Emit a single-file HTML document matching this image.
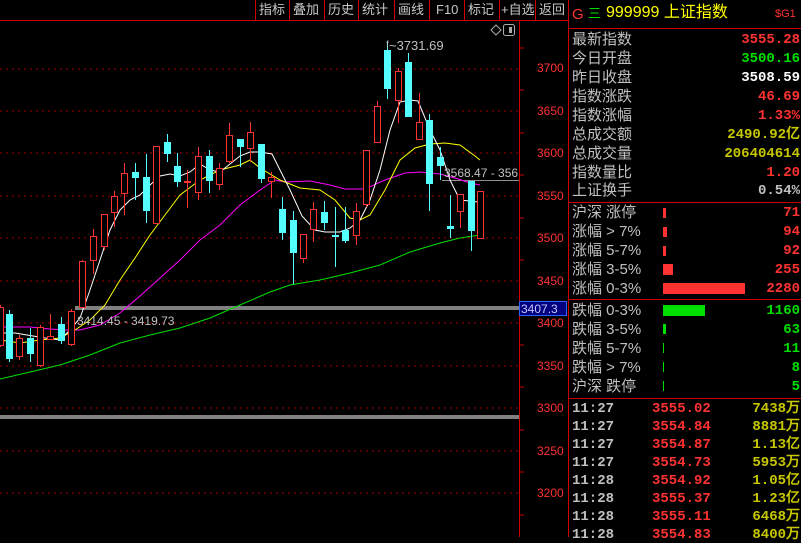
<!DOCTYPE html>
<html><head><meta charset="utf-8"><style>
*{margin:0;padding:0}
body{width:801px;height:537px;background:#000;overflow:hidden;position:relative;font-family:"Liberation Sans","Noto Sans CJK SC",sans-serif;}
.a{position:absolute;white-space:nowrap;line-height:1}
.m{font-size:13px;color:#c8c8c8;top:3px}
.p{font-size:15px;color:#c0c0c0;left:572px}
.v{font-size:14px;right:1px;font-family:"Liberation Mono","Noto Sans CJK SC",monospace;font-weight:bold}
.r{color:#ff3232}.g{color:#00e000}.y{color:#c8c800}.w{color:#fff}.gr{color:#c0c0c0}
.t{font-size:14px;font-family:"Liberation Mono",monospace;font-weight:bold}
</style></head><body>
<svg width="801" height="537" style="position:absolute;left:0;top:0">
<g stroke="#a00" stroke-dasharray="2,4" stroke-width="1">
<line x1="0" y1="69" x2="519" y2="69"/><line x1="0" y1="111" x2="519" y2="111"/><line x1="0" y1="153" x2="519" y2="153"/><line x1="0" y1="196" x2="519" y2="196"/><line x1="0" y1="238" x2="519" y2="238"/><line x1="0" y1="281" x2="519" y2="281"/><line x1="0" y1="323" x2="519" y2="323"/><line x1="0" y1="366" x2="519" y2="366"/><line x1="0" y1="408" x2="519" y2="408"/><line x1="0" y1="451" x2="519" y2="451"/><line x1="0" y1="493" x2="519" y2="493"/>
</g>
<line x1="0" y1="20.5" x2="568" y2="20.5" stroke="#c00"/>
<line x1="519.5" y1="20" x2="519.5" y2="537" stroke="#c00"/>
<line x1="568.5" y1="0" x2="568.5" y2="537" stroke="#c00"/>
<line x1="568" y1="28.5" x2="801" y2="28.5" stroke="#c00"/>
<line x1="568" y1="202.5" x2="801" y2="202.5" stroke="#c00"/>
<line x1="568" y1="299.5" x2="801" y2="299.5" stroke="#c00"/>
<line x1="568" y1="398.5" x2="801" y2="398.5" stroke="#c00"/>
<g stroke="#c00"><line x1="519" y1="48" x2="524" y2="48"/><line x1="519" y1="90" x2="524" y2="90"/><line x1="519" y1="133" x2="524" y2="133"/><line x1="519" y1="175" x2="524" y2="175"/><line x1="519" y1="218" x2="524" y2="218"/><line x1="519" y1="260" x2="524" y2="260"/><line x1="519" y1="345" x2="524" y2="345"/><line x1="519" y1="387" x2="524" y2="387"/><line x1="519" y1="430" x2="524" y2="430"/><line x1="519" y1="472" x2="524" y2="472"/><line x1="519" y1="515" x2="524" y2="515"/></g>
<g stroke="#c00"><line x1="255.5" y1="0" x2="255.5" y2="20"/><line x1="289.5" y1="0" x2="289.5" y2="20"/><line x1="324.5" y1="0" x2="324.5" y2="20"/><line x1="358.5" y1="0" x2="358.5" y2="20"/><line x1="394.5" y1="0" x2="394.5" y2="20"/><line x1="429.5" y1="0" x2="429.5" y2="20"/><line x1="464.5" y1="0" x2="464.5" y2="20"/><line x1="499.5" y1="0" x2="499.5" y2="20"/><line x1="535.5" y1="0" x2="535.5" y2="20"/></g>
<rect x="75" y="306" width="444" height="4" fill="#808080"/>
<rect x="0" y="415" width="519" height="4" fill="#808080"/>
<line x1="442" y1="180.5" x2="519" y2="180.5" stroke="#909090"/>
<g fill="none" stroke-width="1">
<polyline stroke="#00e000" points="0,379 30,372 60,365 90,355 120,343 150,335 180,328 210,318 240,305 270,292 290,285 320,280 350,273 380,265 410,252 440,243 460,238 480,235"/>
<polyline stroke="#ff00ff" points="0,327 30,327 50,329 65,330 80,330 100,325 120,313 140,296 160,278 180,260 200,240 220,225 240,205 260,190 275,180 285,182 310,181 330,185 345,189 365,189 385,180 405,173 420,172 440,174 455,178 470,183 480,185"/>
<polyline stroke="#ffff00" points="0,340 20,343 40,340 60,338 75,330 90,320 105,305 120,280 135,258 150,235 165,215 180,195 200,180 220,170 240,165 250,160 260,168 280,180 300,188 320,190 335,200 350,218 360,220 370,215 385,190 400,160 415,148 430,144 445,143 460,145 475,156 480,160"/>
<polyline stroke="#ffffff" points="0,333 15,333 45,338 60,340 70,330 80,318 90,290 100,260 110,230 120,210 130,200 140,195 150,185 160,176 170,174 180,176 190,172 200,164 210,170 220,172 230,164 240,156 250,152 260,152 272,154 280,170 290,190 302,216 315,230 325,232 340,232 350,228 360,220 370,200 380,170 390,130 400,102 410,100 418,101 430,130 440,150 450,180 460,200 470,201 478,202"/>
</g>
<g id="c" stroke-width="1"></g>
<text x="386" y="50" fill="#c0c0c0" font-size="13" font-family="Liberation Sans">ᶠ~3731.69</text>
<text x="77" y="325" fill="#c0c0c0" font-size="12" font-family="Liberation Sans">3414.45 - 3419.73</text>
<text x="444" y="177" fill="#c0c0c0" font-size="12" font-family="Liberation Sans">3568.47 - 356</text>
<path d="M491 30 L496 25 L501 30 L496 35 Z" fill="none" stroke="#aaa"/>
<rect x="503.5" y="24.5" width="11" height="11" rx="2" fill="none" stroke="#aaa"/><rect x="509" y="27" width="3" height="6" fill="#aaa"/>
<rect x="663" y="208" width="3" height="10" fill="#ff3232"/><rect x="663" y="227" width="4" height="10" fill="#ff3232"/><rect x="663" y="246" width="3" height="10" fill="#ff3232"/><rect x="663" y="264" width="10" height="11" fill="#ff3232"/><rect x="663" y="283" width="82" height="11" fill="#ff3232"/>
<rect x="663" y="305" width="42" height="11" fill="#00e000"/><rect x="663" y="324" width="3" height="10" fill="#00e000"/><rect x="663" y="343" width="1" height="10" fill="#00e000"/><rect x="663" y="362" width="1" height="10" fill="#00e000"/><rect x="663" y="381" width="1" height="10" fill="#00e000"/>
</svg>
<script>
var d=[[0,307,345,305,347,'r'],[8.5,314,359,310,362,'c'],[19,338,356,335,360,'r'],[29.5,338,354,328,362,'c'],[40,327,365,325,367,'r'],[50,336,339,314,340,'r'],[61,324,341,317,344,'c'],[71,311,344,309,346,'r'],[82,261,307,260,307,'r'],[93,236,260,229,274,'r'],[103.5,214,246,214,250,'r'],[114,196,212,191,227,'r'],[124,173,193,163,215,'r'],[134.5,172,178,163,200,'c'],[145.5,177,211,154,223,'c'],[155.5,146,223,146,223,'r'],[166.5,142,154,134,162,'c'],[176.5,166,182,153,187,'c'],[187,181,182,170,208,'r'],[197.5,156,192,147,200,'r'],[208.5,156,181,150,193,'c'],[219,168,184,163,190,'r'],[229,135,161,123,163,'r'],[239.5,139,147,139,167,'c'],[250,132,148,122,162,'r'],[260.5,144,179,144,183,'c'],[271,177,181,172,198,'r'],[281.5,209,233,197,240,'c'],[292.5,220,253,211,284,'c'],[302.5,234,258,234,263,'r'],[313,209,229,202,242,'r'],[323.5,212,223,201,230,'c'],[334.5,235,237,207,267,'c'],[344.5,230,241,207,243,'c'],[355.5,211,235,203,245,'r'],[365.5,150,204,150,207,'r'],[376.5,106,142,101,142,'r'],[386.5,50,89,41,99,'c'],[397.5,71,100,68,123,'r'],[407.5,62,117,53,117,'c'],[418.5,122,139,93,139,'r'],[428.5,120,184,114,211,'c'],[439.5,157,166,147,180,'c'],[449.5,226,229,195,238,'c'],[460,194,211,194,228,'r'],[470.5,181,231,181,251,'c'],[480,191,238,191,238,'r']];
var s='';d.forEach(function(a){var x=Math.round(a[0]),col=a[5]=='r'?'#ff3232':'#54ffff';
s+='<line x1="'+(x+.5)+'" y1="'+a[3]+'" x2="'+(x+.5)+'" y2="'+a[4]+'" stroke="'+col+'"/>';
if(a[5]=='r')s+='<rect x="'+(x-2.5)+'" y="'+(a[1]+.5)+'" width="6" height="'+Math.max(1,a[2]-a[1])+'" fill="#000" stroke="'+col+'"/>';
else s+='<rect x="'+(x-3)+'" y="'+a[1]+'" width="7" height="'+Math.max(2,a[2]-a[1])+'" fill="'+col+'"/>';});
document.getElementById('c').innerHTML=s;
</script>
<div class="a m" style="left:259px">指标</div><div class="a m" style="left:293px">叠加</div><div class="a m" style="left:328px">历史</div><div class="a m" style="left:362px">统计</div><div class="a m" style="left:398px">画线</div><div class="a m" style="left:436px">F10</div><div class="a m" style="left:468px">标记</div><div class="a m" style="left:501px">+自选</div><div class="a m" style="left:539px">返回</div>
<div class="a r" style="left:537px;top:62px;font-size:12px">3700</div><div class="a r" style="left:537px;top:105px;font-size:12px">3650</div><div class="a r" style="left:537px;top:147px;font-size:12px">3600</div><div class="a r" style="left:537px;top:190px;font-size:12px">3550</div><div class="a r" style="left:537px;top:232px;font-size:12px">3500</div><div class="a r" style="left:537px;top:275px;font-size:12px">3450</div><div class="a r" style="left:537px;top:317px;font-size:12px">3400</div><div class="a r" style="left:537px;top:360px;font-size:12px">3350</div><div class="a r" style="left:537px;top:402px;font-size:12px">3300</div><div class="a r" style="left:537px;top:445px;font-size:12px">3250</div><div class="a r" style="left:537px;top:487px;font-size:12px">3200</div>
<div class="a" style="left:519px;top:301px;width:48px;height:15px;background:#000080;border:1px solid #3060ff;box-sizing:border-box;color:#c8c8ff;font-size:12px;padding:1px 0 0 1px">3407.3</div>
<div class="a r" style="left:572px;top:7px;font-size:15px">G</div><div class="a g" style="left:588px;top:7px;font-size:13px">三</div><div class="a" style="left:606px;top:5px;font-size:16px;color:#ffff00">999999 上证指数</div><div class="a r" style="left:775px;top:9px;font-size:11px">$G1</div>
<div class="a p" style="top:32px">最新指数</div><div class="a v r" style="top:33px">3555.28</div>
<div class="a p" style="top:51px">今日开盘</div><div class="a v g" style="top:52px">3500.16</div>
<div class="a p" style="top:70px">昨日收盘</div><div class="a v w" style="top:71px">3508.59</div>
<div class="a p" style="top:89px">指数涨跌</div><div class="a v r" style="top:90px">46.69</div>
<div class="a p" style="top:108px">指数涨幅</div><div class="a v r" style="top:109px">1.33%</div>
<div class="a p" style="top:127px">总成交额</div><div class="a v y" style="top:128px">2490.92亿</div>
<div class="a p" style="top:146px">总成交量</div><div class="a v y" style="top:147px">206404614</div>
<div class="a p" style="top:165px">指数量比</div><div class="a v r" style="top:166px">1.20</div>
<div class="a p" style="top:183px">上证换手</div><div class="a v gr" style="top:184px">0.54%</div>
<div class="a p" style="top:205px">沪深 涨停</div><div class="a v r" style="top:206px">71</div>
<div class="a p" style="top:224px">涨幅 &gt; 7%</div><div class="a v r" style="top:225px">94</div>
<div class="a p" style="top:243px">涨幅 5-7%</div><div class="a v r" style="top:244px">92</div>
<div class="a p" style="top:262px">涨幅 3-5%</div><div class="a v r" style="top:263px">255</div>
<div class="a p" style="top:281px">涨幅 0-3%</div><div class="a v r" style="top:282px">2280</div>
<div class="a p" style="top:303px">跌幅 0-3%</div><div class="a v g" style="top:304px">1160</div>
<div class="a p" style="top:322px">跌幅 3-5%</div><div class="a v g" style="top:323px">63</div>
<div class="a p" style="top:341px">跌幅 5-7%</div><div class="a v g" style="top:342px">11</div>
<div class="a p" style="top:360px">跌幅 &gt; 7%</div><div class="a v g" style="top:361px">8</div>
<div class="a p" style="top:379px">沪深 跌停</div><div class="a v g" style="top:380px">5</div>
<div id="tk"></div>
<script>
var t=[['11:27','3555.02','7438万'],['11:27','3554.84','8881万'],['11:27','3554.87','1.13亿'],['11:27','3554.73','5953万'],['11:28','3554.92','1.05亿'],['11:28','3555.37','1.23亿'],['11:28','3555.11','6468万'],['11:28','3554.83','8400万']];
var h='';t.forEach(function(r,i){var y=402+i*18;h+='<div class="a t gr" style="left:572px;top:'+y+'px">'+r[0]+'</div><div class="a t r" style="left:652px;top:'+y+'px">'+r[1]+'</div><div class="a t y" style="right:1px;top:'+y+'px">'+r[2]+'</div>';});
document.getElementById('tk').innerHTML=h;
</script>
</body></html>
